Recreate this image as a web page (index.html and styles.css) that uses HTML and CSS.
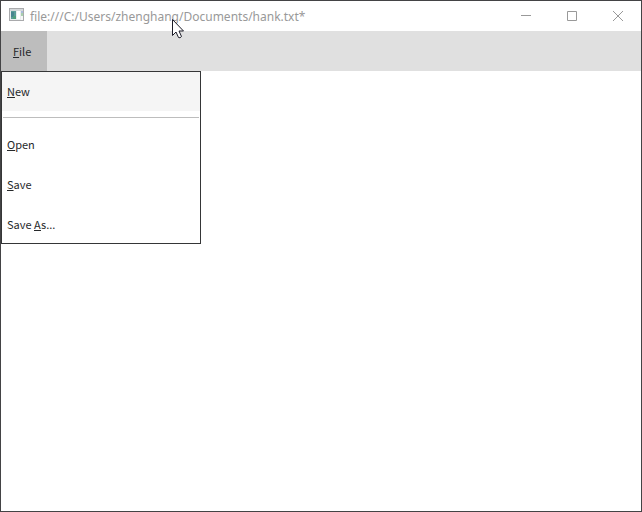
FILE: index.html
```
<!DOCTYPE html>
<html lang="en">
<head>
  <meta charset="UTF-8">
  <meta name="viewport" content="width=device-width, initial-scale=1.0">
  <title>file:///C:/Users/zhenghang/Documents/hank.txt*</title>
  <link rel="stylesheet" href="styles.css">
</head>
<body>
  <div class="window">
    <header class="titlebar">
      <svg class="app-icon" width="16" height="16" viewBox="0 0 16 16">
        <rect x="0.5" y="0.5" width="14" height="12" fill="#e9edee" stroke="#a9aaac"/>
        <rect x="1" y="1" width="13" height="2" fill="#d5d8da"/>
        <rect x="2" y="3" width="5" height="8" fill="#5c9c98"/>
        <rect x="2" y="4" width="3" height="5" fill="#48858f"/>
        <rect x="4" y="8" width="3" height="3" fill="#4f9f7c"/>
        <rect x="8" y="3" width="3" height="8" fill="#fff"/>
        <rect x="12" y="3" width="2" height="2" fill="#a9b9dc"/>
        <rect x="12" y="5" width="2" height="3" fill="#a8cfae"/>
        <rect x="12" y="8" width="2" height="4" fill="#f7f8f8"/>
      </svg>
      <span class="title">file:///C:/Users/zhenghang/Documents/hank.txt*</span>
      <div class="controls">
        <button class="control" aria-label="Minimize">
          <svg width="10" height="10" viewBox="0 0 10 10"><path d="M0 4.500h10"/></svg>
        </button>
        <button class="control" aria-label="Maximize">
          <svg width="10" height="10" viewBox="0 0 10 10"><path d="M0.5 0.5h9v9h-9z"/></svg>
        </button>
        <button class="control" aria-label="Close">
          <svg width="10" height="10" viewBox="0 0 10 10"><path d="M0 0l10 10M10 0L0 10"/></svg>
        </button>
      </div>
    </header>
    <nav class="menubar">
      <button class="menu-button" aria-haspopup="true" aria-expanded="true"><u>F</u>ile</button>
      <div class="menu" role="menu">
        <button class="menu-item active" role="menuitem"><u>N</u>ew</button>
        <hr class="separator">
        <button class="menu-item" role="menuitem"><u>O</u>pen</button>
        <button class="menu-item" role="menuitem"><u>S</u>ave</button>
        <button class="menu-item" role="menuitem">Save <u>A</u>s...</button>
      </div>
    </nav>
    <main class="editor"></main>
    <svg class="cursor" width="13" height="20" viewBox="0 0 13 20">
      <path d="M0.5 0.5v16l3.5-3.5 2.5 5.5q1.5 1 3-1l-2.500-5.500h4.500z" fill="#fff" stroke="#1c1c28"/>
    </svg>
  </div>
</body>
</html>
```
FILE: styles.css
```
* { box-sizing: border-box; }
body { margin: 0; font-family: "Noto Sans CJK SC", "Noto Sans", sans-serif; font-size: 11px; color: #26282a; }
button { margin: 0; padding: 0; border: none; background: none; font: inherit; color: inherit; }
u { text-underline-offset: 1px; }
.window { position: relative; display: flex; flex-direction: column; min-height: 100vh; border: 1px solid #434345; background: #fff; }
.titlebar { display: flex; align-items: center; height: 30px; padding-left: 8px; color: #999; }
.app-icon { margin-right: 5px; }
.title { flex: 1; font-family: "Noto Sans", sans-serif; font-size: 12px; white-space: nowrap; }
.controls { display: flex; height: 100%; }
.control { display: flex; align-items: center; justify-content: center; width: 46px; }
.control svg { fill: none; stroke: #999; }
.menubar { position: relative; display: flex; height: 40px; background: #e0e0e0; }
.menu-button { width: 46px; padding: 0 12px; background: #bdbdbd; text-align: left; }
.menu { position: absolute; top: 100%; left: 0; display: flex; flex-direction: column; width: 200px; background: #fff; }
/* frame is drawn over the items */
.menu::after { content: ""; position: absolute; inset: 0; border: 1px solid #353637; pointer-events: none; }
.menu-item { height: 40px; padding: 0 6px; text-align: left; }
.menu-item.active { background: #f5f5f5; }
.separator { align-self: stretch; height: 1px; margin: 6px 2px; border: none; background: #bdbdbd; }
.editor { flex: 1; }
.cursor { position: absolute; left: 171px; top: 18px; }
```
